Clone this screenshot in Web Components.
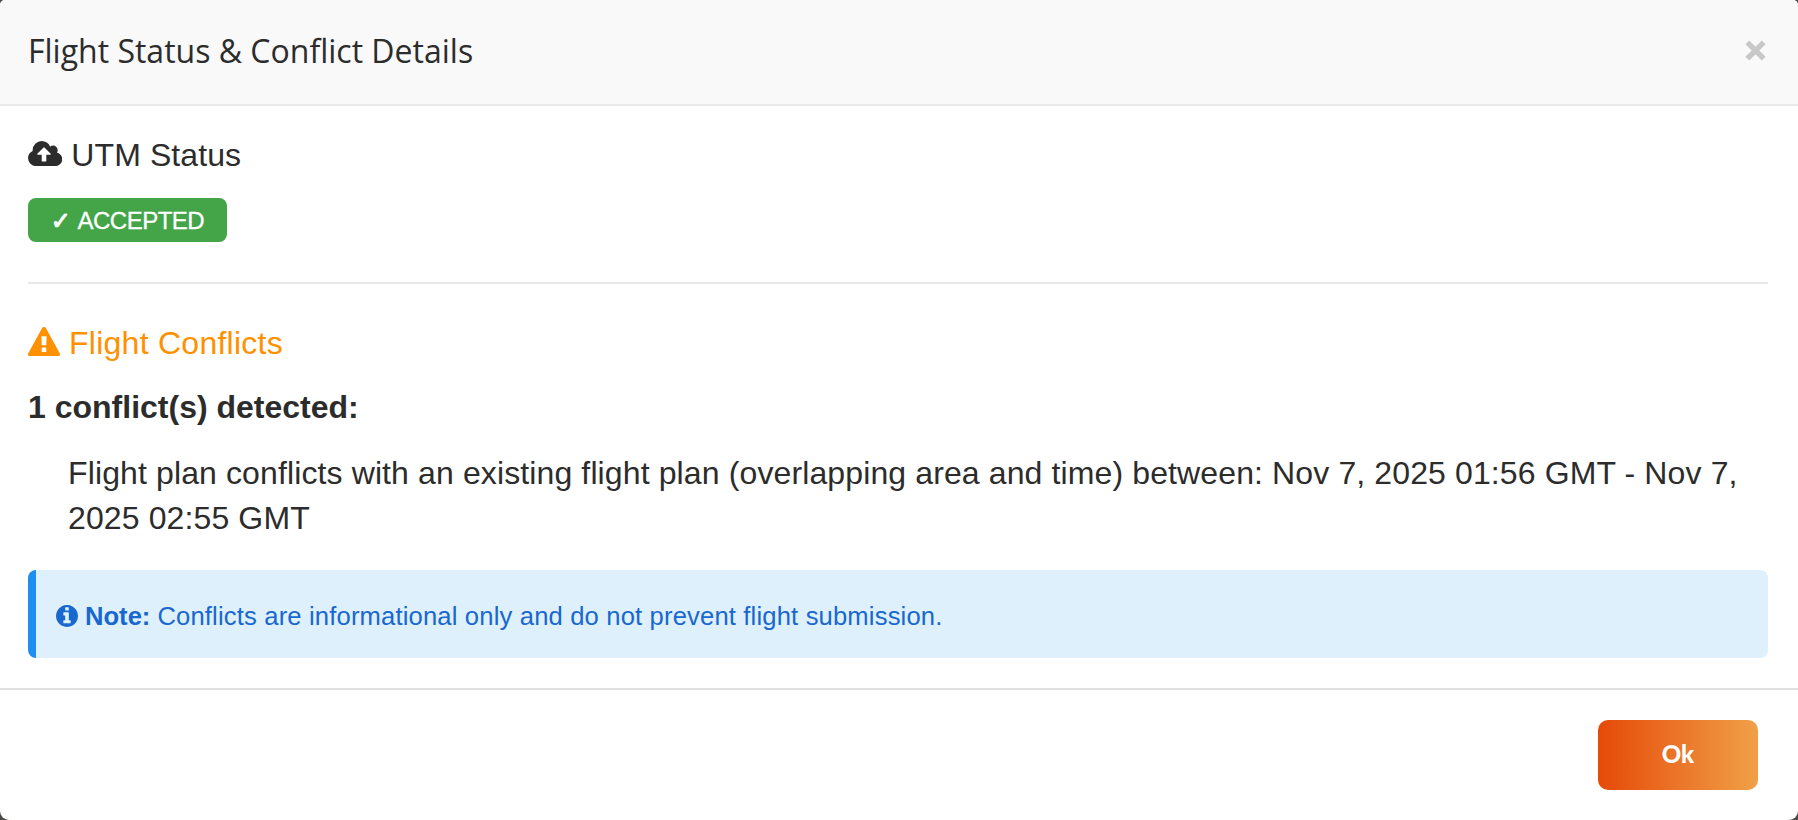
<!DOCTYPE html>
<html lang="en">
<head>
<meta charset="utf-8">
<title>Flight Status &amp; Conflict Details</title>
<style>
  html, body { margin: 0; height: 100%; background: #4a4a48; overflow: hidden; }
  body { font-family: "Liberation Sans", Arial, sans-serif; font-size: 32px; color: #2c2c2c; }
</style>
</head>
<body>

<flight-modal>
  <span slot="title">Flight Status &amp; Conflict Details</span>

  <section-title icon="cloud">UTM Status</section-title>
  <status-badge><span slot="mark">✓</span> ACCEPTED</status-badge>
  <section-rule></section-rule>

  <section-title icon="warning" style="--title-color: #ff9100; --title-spacing: 0.26px">Flight Conflicts</section-title>
  <conflict-list>
    <span slot="summary">1 conflict(s) detected:</span>
    Flight plan conflicts with an existing flight plan (overlapping area and time) between: Nov 7, 2025 01:56 GMT - Nov 7, 2025 02:55 GMT
  </conflict-list>
  <info-note><b slot="label">Note:</b>Conflicts are informational only and do not prevent flight submission.</info-note>

  <action-button slot="footer">Ok</action-button>
</flight-modal>

<script>
// Icon outlines, each with its own tight viewBox
const ICONS = {
    cloud: { box: '0 128 1920 1408', d: 'M1280 864q0-14-9-23l-352-352q-9-9-23-9t-23 9l-351 351q-10 12-10 24 0 14 9 23t23 9h224v352q0 13 9.5 22.5t22.5 9.5h192q13 0 22.5-9.5t9.5-22.5v-352h224q13 0 22.5-9.5t9.5-22.5zm640 288q0 159-112.5 271.5t-271.5 112.5h-1088q-185 0-316.5-131.5t-131.5-316.5q0-130 70-240t188-165q-2-30-2-43 0-212 150-362t362-150q156 0 285.5 87t188.5 231q71-62 166-62 106 0 181 75t75 181q0 76-41 138 130 31 213.5 135.5t83.5 238.5z' },
    warning: { box: '0 0 1792 1664', d: 'M1024 1375v-190q0-14-9.5-23.5t-22.5-9.5h-192q-13 0-22.5 9.5t-9.5 23.5v190q0 14 9.5 23.5t22.5 9.5h192q13 0 22.5-9.5t9.5-23.5zm-2-374l18-459q0-12-10-19-13-11-24-11h-220q-11 0-24 11-10 7-10 21l17 457q0 10 10 16.5t24 6.5h185q14 0 23.5-6.5t10.5-16.5zm-14-934l768 1408q35 63-2 126-17 29-46.5 46t-63.5 17h-1536q-34 0-63.5-17t-46.5-46q-37-63-2-126l768-1408q17-31 47-49t65-18 65 18 47 49z' },
    info: { box: '128 128 1536 1536', d: 'M1152 1376v-160q0-14-9-23t-23-9h-96v-512q0-14-9-23t-23-9h-320q-14 0-23 9t-9 23v160q0 14 9 23t23 9h96v320h-96q-14 0-23 9t-9 23v160q0 14 9 23t23 9h448q14 0 23-9t9-23zm-128-896v-160q0-14-9-23t-23-9h-192q-14 0-23 9t-9 23v160q0 14 9 23t23 9h192q14 0 23-9t9-23zm640 416q0 209-103 385.5t-279.5 279.5-385.5 103-385.5-103-279.5-279.5-103-385.5 103-385.5 279.5-279.5 385.5-103 385.5 103 279.5 279.5 103 385.5z' },
};

function icon(name, width, height) {
    const { box, d } = ICONS[name];
    return `<svg width="${width}" height="${height}" viewBox="${box}" fill="currentColor" aria-hidden="true"><path d="${d}"/></svg>`;
}

class FlightModal extends HTMLElement {
    constructor() {
        super();
        this.attachShadow({ mode: 'open' });
    }

    connectedCallback() {
        this.shadowRoot.innerHTML = `
      <style>
        :host {
          display: flex;
          flex-direction: column;
          height: 820px;
          box-sizing: border-box;
          background: #fff;
          border-radius: 5px 5px 9px 9px;
          overflow: hidden;
        }
        * { box-sizing: border-box; margin: 0; }

        header {
          display: flex;
          align-items: center;
          justify-content: space-between;
          height: 106px;
          padding: 0 32px 4px 28px;
          background: #f9f9f9;
          border-bottom: 2px solid #e9e9e9;
        }
        h1 {
          padding-top: 2px;
          font: 400 32px/44px "Open Sans", sans-serif;
          white-space: nowrap;
        }
        .close {
          display: flex;
          padding: 0;
          border: none;
          background: none;
          color: #c8c8c8;
          cursor: pointer;
        }

        main {
          flex: 1;
          display: flex;
          flex-direction: column;
          align-items: stretch;
          padding: 27px 30px 0 28px;
        }

        footer {
          display: flex;
          justify-content: flex-end;
          height: 132px;
          padding: 30px 40px 0;
          border-top: 2px solid #e0e0e0;
        }
      </style>
      <header>
        <h1><slot name="title"></slot></h1>
        <button class="close" aria-label="Close">
          <svg width="21" height="21" viewBox="0 0 21 21" fill="none" stroke="currentColor" stroke-width="5.4"><path d="M2.3 2.3l16.4 16.4M18.7 2.3L2.3 18.7"/></svg>
        </button>
      </header>
      <main><slot></slot></main>
      <footer><slot name="footer"></slot></footer>
    `;
        this.shadowRoot.querySelector('.close').addEventListener('click', () => this.remove());
    }
}

class SectionTitle extends HTMLElement {
    constructor() {
        super();
        this.attachShadow({ mode: 'open' });
    }

    connectedCallback() {
        const isCloud = this.getAttribute('icon') === 'cloud';
        this.shadowRoot.innerHTML = `
      <style>
        :host {
          display: flex;
          align-items: center;
          gap: 9px;
          height: 45px;
          line-height: 45px;
          color: var(--title-color, inherit);
          letter-spacing: var(--title-spacing, 0.1px);
          white-space: nowrap;
        }
        svg { flex-shrink: 0; margin-bottom: 4px; }
      </style>
      ${isCloud ? icon('cloud', 34.3, 25.1) : icon('warning', 32, 29.7)}
      <span><slot></slot></span>
    `;
    }
}

class StatusBadge extends HTMLElement {
    constructor() {
        super();
        this.attachShadow({ mode: 'open' });
    }

    connectedCallback() {
        this.shadowRoot.innerHTML = `
      <style>
        :host {
          display: flex;
          align-items: center;
          justify-content: center;
          align-self: flex-start;
          box-sizing: border-box;
          width: 199px;
          height: 44px;
          padding-top: 2px;
          margin-top: 20px;
          border-radius: 8px;
          background: #43a547;
          color: #fff;
          font: 24px/42px "Liberation Sans", "DejaVu Sans", sans-serif;
          letter-spacing: -0.5px;
          white-space: nowrap;
        }
        .mark { margin-right: 7px; -webkit-text-stroke: 1px #fff; }
        .text { -webkit-text-stroke: 0.3px #fff; }
      </style>
      <span class="mark"><slot name="mark"></slot></span>
      <span class="text"><slot></slot></span>
    `;
    }
}

class SectionRule extends HTMLElement {
    constructor() {
        super();
        this.attachShadow({ mode: 'open' }).innerHTML = `
      <style>
        :host { display: block; height: 2px; margin: 40px 0 37px; background: #e9e9e9; }
      </style>
    `;
    }
}

class ConflictList extends HTMLElement {
    constructor() {
        super();
        this.attachShadow({ mode: 'open' });
    }

    connectedCallback() {
        this.shadowRoot.innerHTML = `
      <style>
        :host { display: block; margin-top: 19px; line-height: 45px; }
        .summary { font-weight: 700; white-space: nowrap; }
        .item { margin-top: 21px; padding-left: 40px; letter-spacing: 0.12px; }
      </style>
      <div class="summary"><slot name="summary"></slot></div>
      <div class="item"><slot></slot></div>
    `;
    }
}

class InfoNote extends HTMLElement {
    constructor() {
        super();
        this.attachShadow({ mode: 'open' });
    }

    connectedCallback() {
        this.shadowRoot.innerHTML = `
      <style>
        :host {
          display: flex;
          align-items: center;
          box-sizing: border-box;
          height: 88px;
          margin-top: 29px;
          padding: 4px 20px 0;
          border-left: 8px solid #1f8ef1;
          border-radius: 8px;
          background: #def0fc;
          color: #1868cf;
          font-size: 25.6px;
          line-height: 36px;
          white-space: nowrap;
        }
        svg { margin-right: 7px; }
        .label { margin-right: 7px; }
        .text { letter-spacing: 0.16px; }
      </style>
      ${icon('info', 22, 22)}
      <span class="label"><slot name="label"></slot></span>
      <span class="text"><slot></slot></span>
    `;
    }
}

class ActionButton extends HTMLElement {
    constructor() {
        super();
        this.attachShadow({ mode: 'open' });
    }

    connectedCallback() {
        this.shadowRoot.innerHTML = `
      <style>
        :host { display: block; }
        button {
          width: 160px;
          height: 70px;
          padding: 0 0 2px;
          border: none;
          border-radius: 10px;
          background: linear-gradient(90deg, #e64a08, #f0a048);
          color: #fff;
          font: 900 24px/68px Lato, sans-serif;
          cursor: pointer;
        }
      </style>
      <button><slot></slot></button>
    `;
    }
}

customElements.define('flight-modal', FlightModal);
customElements.define('section-title', SectionTitle);
customElements.define('status-badge', StatusBadge);
customElements.define('section-rule', SectionRule);
customElements.define('conflict-list', ConflictList);
customElements.define('info-note', InfoNote);
customElements.define('action-button', ActionButton);
</script>
</body>
</html>
